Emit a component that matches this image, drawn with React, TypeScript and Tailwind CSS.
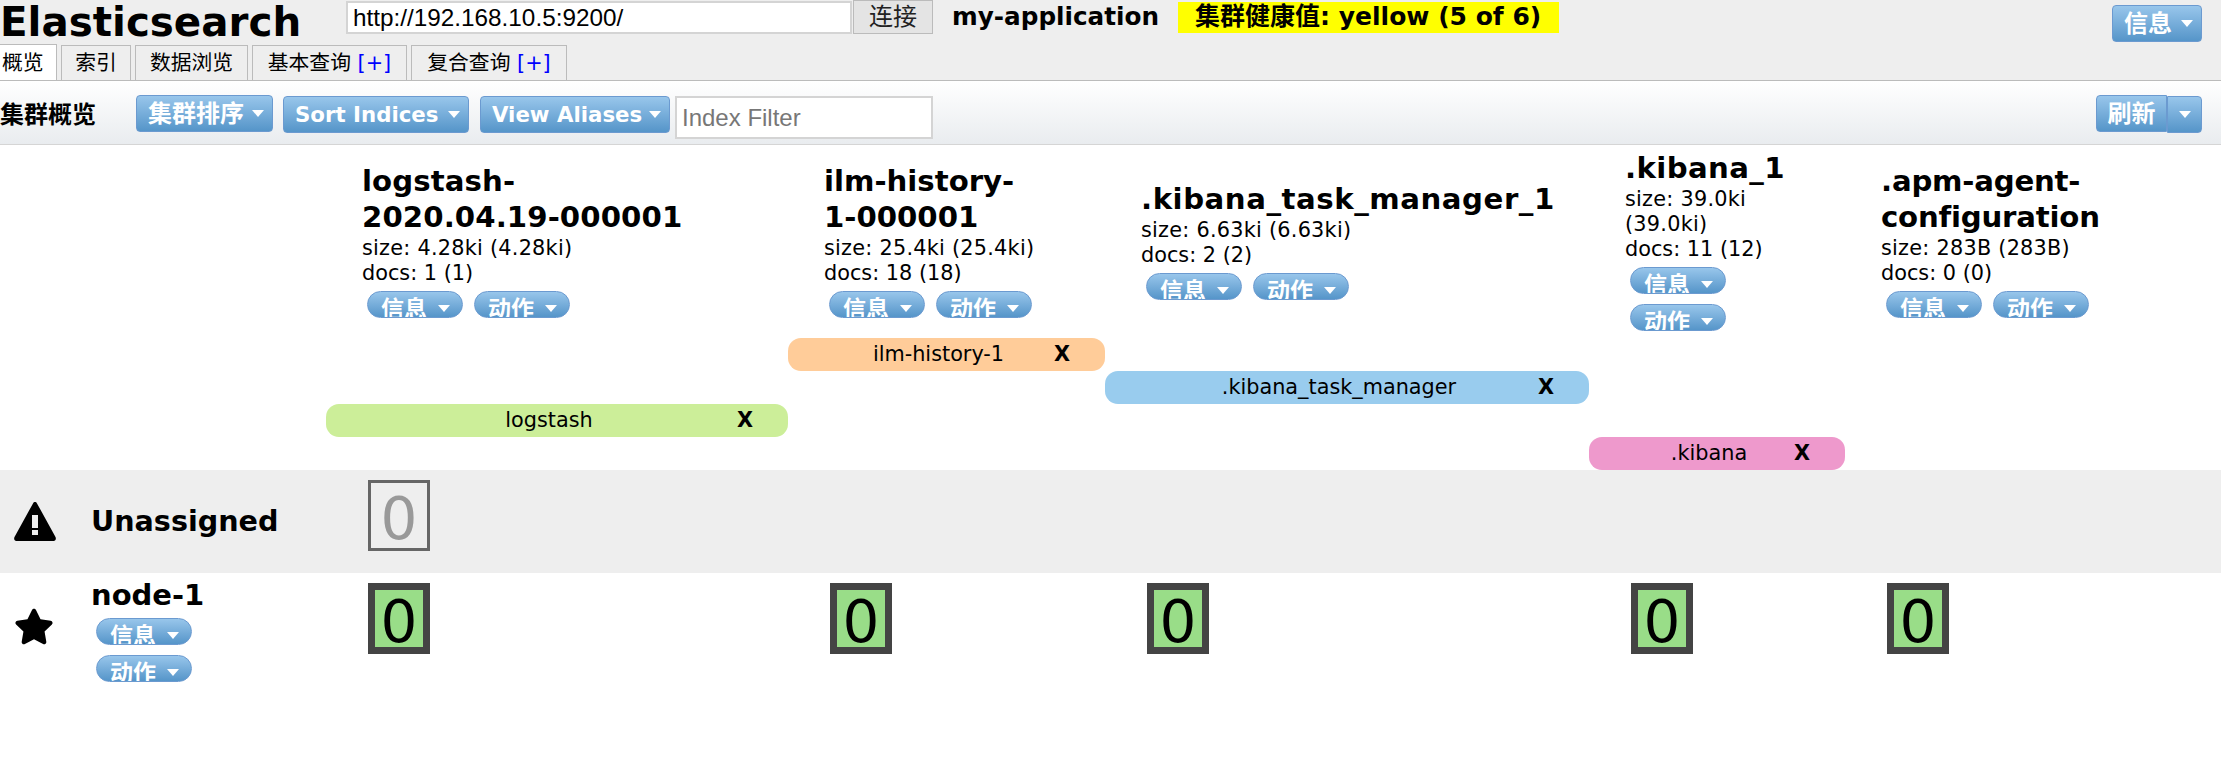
import React from 'react';
import { FaStar } from 'react-icons/fa';

const FONT = "font-['DejaVu_Sans','Noto_Sans_CJK_SC',sans-serif]";
const COLUMNS = 'grid grid-cols-[326px_462px_317px_484px_256px_376px]';
const BLUE = 'bg-gradient-to-b from-[#98c6eb] to-[#5595c9] border border-[#6b9ad0] text-white font-bold';

const Caret = () => (
  <span className="inline-block w-0 h-0 border-x-[6px] border-t-[7px] border-x-transparent border-t-white" />
);

const MenuButton: React.FC<{ label: string; className?: string }> = ({ label, className }) => (
  <button className={`${BLUE} h-[37px] rounded-[4px] flex items-center justify-between pl-[11px] pr-[8px] leading-none whitespace-nowrap ${className ?? ''}`}>
    <span>{label}</span>
    <Caret />
  </button>
);

const Pill: React.FC<{ label: string }> = ({ label }) => (
  <div className={`${BLUE} w-[96px] h-[27px] overflow-hidden rounded-[14px] flex items-start pl-[13px] pt-[4px] text-[23px] leading-[27px]`}>
    <span className="w-[57px] shrink-0">{label}</span>
    <span className="mt-[9px] flex"><Caret /></span>
  </div>
);

const WarningIcon = () => (
  <svg viewBox="0 0 42 39" className="w-[42px] h-[39px] shrink-0" fill="currentColor">
    <path
      fillRule="evenodd"
      d="M21 0c.8 0 1.500.5 2 1.400L41.500 35c.9 1.800 0 4-1.900 4H2.400c-1.900 0-2.800-2.200-1.900-4L19 1.400C19.500.5 20.200 0 21 0zM18 13v13h6V13zM18 28v5h6v-5z"
    />
  </svg>
);

const indices = [
  { lines: ['logstash-', '2020.04.19-000001'], size: 'size: 4.28ki (4.28ki)', docs: 'docs: 1 (1)', title: 'tracking-[0.1px]' },
  { lines: ['ilm-history-', '1-000001'], size: 'size: 25.4ki (25.4ki)', docs: 'docs: 18 (18)', title: '' },
  { lines: ['.kibana_task_manager_1'], size: 'size: 6.63ki (6.63ki)', docs: 'docs: 2 (2)', title: 'tracking-[0.55px]' },
  { lines: ['.kibana_1'], size: 'size: 39.0ki (39.0ki)', docs: 'docs: 11 (12)', title: 'tracking-[0.4px]' },
  { lines: ['.apm-agent-', 'configuration'], size: 'size: 283B (283B)', docs: 'docs: 0 (0)', title: '-tracking-[0.2px]' },
];

const aliases = [
  { name: 'ilm-history-1', cell: 'col-start-3 bg-[#ffcc99]' },
  { name: '.kibana_task_manager', cell: 'col-start-4 bg-[#99ccee]' },
  { name: 'logstash', cell: 'col-start-2 bg-[#ccee99]' },
  { name: '.kibana', cell: 'col-start-5 bg-[#ee99cc]' },
];

const tabs = [
  { label: '索引', width: 'w-[70px]' },
  { label: '数据浏览', width: 'w-[113px]' },
  { label: '基本查询', plus: true, width: 'w-[155px]' },
  { label: '复合查询', plus: true, width: 'w-[156px]' },
];

export default function App() {
  return (
    <div className={`${FONT} w-[2221px] h-[771px] overflow-hidden bg-white text-black text-[20.8px] leading-[25px]`}>
      <header className="h-[81px] bg-[#eeeeee] border-b border-[#bbbbbb]">
        <div className="flex items-start h-[45px]">
          <h1 className="w-[346px] text-[40.4px] leading-[44px] font-bold">Elasticsearch</h1>
          <input
            readOnly
            value="http://192.168.10.5:9200/"
            className="w-[506px] h-[33px] mt-[1px] bg-white border-2 border-[#d4d4d4] px-[5px] font-['Liberation_Sans',sans-serif] text-[24.3px] outline-none"
          />
          <button className="w-[80px] h-[34px] ml-[1px] bg-[#e4e4e4] border border-[#bbbbbb] text-[24px] leading-[30px] text-[#222222]">连接</button>
          <span className="ml-[19px] mt-[3px] text-[24.7px] leading-[28px] font-bold">my-application</span>
          <span className="ml-[19px] mt-[2px] h-[31px] w-[381px] bg-[#ffff00] pl-[17px] text-[25px] leading-[30px] font-bold whitespace-nowrap">集群健康值: yellow (5 of 6)</span>
          <MenuButton label="信息" className="w-[90px] ml-auto mr-[19px] mt-[5px] text-[24px]" />
        </div>
        <nav className="flex items-end h-[35px] gap-[4px]">
          <div className="w-[57px] h-[36px] bg-white border-r border-t border-[#bbbbbb] pl-[2px] leading-[36px] relative z-10">概览</div>
          {tabs.map(tab => (
            <div key={tab.label} className={`${tab.width} h-[35px] bg-[#eeeeee] border border-b-0 border-[#bbbbbb] text-center leading-[35px] whitespace-nowrap`}>
              {tab.label}
              {tab.plus && <span className="text-[#0000ff]"> [+]</span>}
            </div>
          ))}
        </nav>
      </header>

      <div className="h-[64px] flex items-start bg-gradient-to-b from-white to-[#e9ecef] border-b border-[#d5d5d5]">
        <h2 className="w-[136px] mt-[20px] text-[24px] leading-[28px] font-bold whitespace-nowrap">集群概览</h2>
        <MenuButton label="集群排序" className="w-[137px] mt-[14px] text-[24px]" />
        <MenuButton label="Sort Indices" className="w-[186px] ml-[10px] mt-[15px] text-[21.3px]" />
        <MenuButton label="View Aliases" className="w-[190px] ml-[11px] mt-[15px] text-[21.3px]" />
        <input
          readOnly
          placeholder="Index Filter"
          className="w-[258px] h-[43px] ml-[5px] mt-[15px] bg-white border-2 border-[#d4d4d4] px-[5px] font-['Liberation_Sans',sans-serif] text-[24px] placeholder:text-[#777777] outline-none"
        />
        <button className={`${BLUE} w-[71px] h-[37px] ml-auto mt-[14px] rounded-l-[4px] text-[24px] leading-none`}>刷新</button>
        <button className={`${BLUE} w-[35px] h-[37px] mr-[19px] mt-[15px] rounded-r-[4px] flex items-center justify-center`}>
          <Caret />
        </button>
      </div>

      <div className={`${COLUMNS} h-[193px]`}>
        <div />
        {indices.map(index => (
          <div key={index.lines[0]} className="pl-[36px] pr-[20px] self-center">
            <h3 className={`${index.title} -mt-[3px] mb-[1px] text-[29.2px] leading-[36px] font-bold`}>
              {index.lines.map(line => (
                <div key={line}>{line}</div>
              ))}
            </h3>
            <div className="tracking-[0.25px]">{index.size}</div>
            <div>{index.docs}</div>
            <div className="flex flex-wrap gap-x-[11px] gap-y-[10px] ml-[5px] mt-[5px]">
              <Pill label="信息" />
              <Pill label="动作" />
            </div>
          </div>
        ))}
      </div>

      {aliases.map(alias => (
        <div key={alias.name} className={`${COLUMNS} h-[33px]`}>
          <div className={`${alias.cell} relative rounded-[13px] pr-4 text-center leading-[33px]`}>
            {alias.name}
            <span className="absolute right-[35px] top-0 font-bold">X</span>
          </div>
        </div>
      ))}

      <div className={`${COLUMNS} h-[103px] bg-[#eeeeee]`}>
        <div className="flex items-center pl-[14px]">
          <WarningIcon />
          <span className="ml-[35px] text-[28.6px] font-bold">Unassigned</span>
        </div>
        <div className="pl-[42px] pt-[10px]">
          <div className="w-[62px] h-[71px] border-[3px] border-[#666666] text-center text-[58px] leading-[72px] text-[#999999]">0</div>
        </div>
      </div>

      <div className={`${COLUMNS} pt-[10px]`}>
        <div className="flex items-start pl-[14px]">
          <FaStar className="w-[40px] h-[37px] mt-[25px] shrink-0" />
          <div className="ml-[37px]">
            <div className="text-[29px] leading-[24px] font-bold">node-1</div>
            <div className="flex flex-col gap-[10px] ml-[5px] mt-[11px]">
              <Pill label="信息" />
              <Pill label="动作" />
            </div>
          </div>
        </div>
        {indices.map(index => (
          <div key={index.lines[0]} className="pl-[42px]">
            <div className="w-[62px] h-[71px] border-[7px] border-[#444444] bg-[#99dd88] text-center text-[58px] leading-[64px]">0</div>
          </div>
        ))}
      </div>
    </div>
  );
}
